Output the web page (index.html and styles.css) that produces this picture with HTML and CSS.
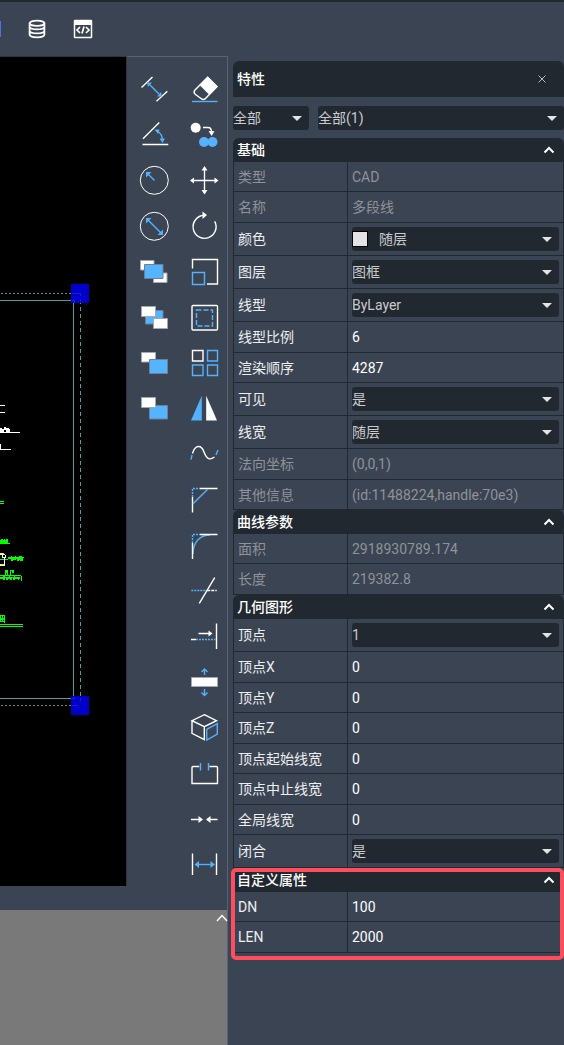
FILE: index.html
```html
<!DOCTYPE html>
<html lang="zh-CN">
<head>
<meta charset="utf-8">
<title>CAD</title>
<link rel="stylesheet" href="styles.css">
</head>
<body>
<div class="app">
<header class="toolbar">
  <span class="toolbar-edge"></span>
  <button class="icon-btn" aria-label="database"><svg class="top-icon" viewBox="0 0 20 20"><g fill="none" stroke="#fff" stroke-width="1.8"><ellipse cx="10" cy="4.2" rx="7.4" ry="2.6"/><path d="M2.6 4.200V15.600C2.600 17.200 5.500 18.300 10 18.300S17.400 17.200 17.400 15.600V4.200M2.600 8C3.500 11.200 16.500 11.200 17.400 8M2.600 12C3.500 15.200 16.500 15.200 17.400 12"/></g></svg></button>
  <button class="icon-btn" aria-label="code"><svg class="top-icon" viewBox="0 0 20 20"><rect x="1.500" y="1.500" width="17" height="17" rx=".5" fill="none" stroke="#fff" stroke-width="1.500"/><path d="M1 1h18v5H1z" fill="#fff"/><path d="M7 8 4 11l3 3M13 8l3 3-3 3M11 7.500 9 14.500" fill="none" stroke="#fff" stroke-width="1.700"/></svg></button>
</header>
<div class="body">
<main class="workspace">
  <div class="drawing">
    <svg class="canvas" viewBox="0 57 126 829" preserveAspectRatio="xMaxYMin slice" shape-rendering="crispEdges" aria-label="drawing">
      <path d="M0 300.500H73.500V698.500H0" fill="none" stroke="#4b9c9b"/>
      <path d="M80.500 293V705" fill="none" stroke="#4b9c9b" stroke-dasharray="4 3"/>
      <path d="M1 293.500H80M1 705.500H80" fill="none" stroke="#5b9494" stroke-dasharray="2 2"/>
      <path d="M71 284h18v19H71zM71 696h18v19H71z" fill="#0000c8"/>
      <path d="M72 293.500H81M80.500 293v3M80.500 299v3M72 300.500h2v2M72 705.500h6M80.500 698v3M72 698.500h2v-2" fill="none" stroke="#1420dc"/>
      <path d="M0 405.500H5M0 412.500H5M0 432.500H20M0 449.500H11M.5 444V449" fill="none" stroke="#fff"/>
      <path d="M0 428h2v1h2v-2h2v1h3v1h1v3H6v-2H4v2H0z" fill="#fff"/>
      <path d="M0 501.500H4M0 503.500H4M0 543.500H10" fill="none" stroke="#0f0"/>
      <path d="M0 540h1v-1h2v1h1v-1h1v1h1v-1h2v4H0z" fill="#0f0"/>
      <path d="M8 557h3v-1h1v1h3v-1h1v1h3v-1h3v1h2v1h-1v3h-3v-1h-1v1h-2v-2h-1v1h-3v1h-2v-2H8z" fill="#0f0"/>
      <path d="M0 559.500H8" fill="none" stroke="#0f0"/>
      <path d="M5 570h3v5H7v-2H6v2H5zM10 570h4v3h-2v-2h-1v4h-1z" fill="#0f0"/>
      <path d="M0 575.500H21M21.500 576v5" fill="none" stroke="#0f0"/>
      <path d="M0 577h3v-1h2v1h4v-1h1v1h4v-1h1v1h5v2h-1v1h-1v-1h-3v1h-2v-2h-1v2h-2v-1H8v1H6v-2H5v2H3v-1H0z" fill="#0f0"/>
      <path d="M4.500 615v8M.5 615v7M2.500 615v7M0 615.500H5M0 618.500H5M0 619.500H5M0 621.500H4M0 624.500H23M0 626.500H23" fill="none" stroke="#0f0"/>
      <path d="M0 554.500H5M2.500 555v3M5.500 555v3M3 557.500H6M4.500 558v8M0 565.500H5" fill="none" stroke="#fff"/>
      <path d="M0 553.500H4M0 564.500H4" fill="none" stroke="#ff0"/>
    </svg>
    <div class="tools" role="toolbar">
      <button class="tool left" aria-label="distance"><svg viewBox="-15 -15 30 30"><path class="w" d="M-12.500-1.500-1.500-12M2.500 12.300 13.300 2.300"/><path class="b" d="M-4-4 5 5"/><path class="bf" d="M-7-6.500h5L-6-2zM8 7.500H3L7 3z"/></svg></button>
      <button class="tool" aria-label="erase"><svg viewBox="-15 -15 30 30"><path class="w" d="M3.700-11.800 13-2.500 1.500 9.500Q-.5 11.500-3 9.500L-8.500 5.500Q-11 3.500-9 1z"/><path class="wf" d="M3.700-12.300 13.700-2.300 5.500 6-4.500-4z"/><path class="b" d="M-12 12.500H13.500"/></svg></button>
      <button class="tool left" aria-label="angle"><svg viewBox="-15 -15 30 30"><path class="w" d="M-11 3.700 5.300-12.500M-11.500 9.500H14.300"/><path class="b" d="M3-4Q8.500-1 8.300 5"/><path class="bf" d="M.5-5.500 5.500-5.500 4-1zM5.500 3.500h5.500L8.500 8z"/></svg></button>
      <button class="tool" aria-label="copy"><svg viewBox="-15 -15 30 30"><circle class="wf" cx="-8.300" cy="-7.300" r="5"/><circle class="bf" cx="0" cy="7" r="5"/><circle class="bf" cx="8.500" cy="7" r="5"/><path class="w" d="M-1-7.500H4Q7.500-7.500 7.500-3"/><path class="wf" d="M4.500-4h6L7.600 1z"/></svg></button>
      <button class="tool left" aria-label="radius"><svg viewBox="-15 -15 30 30"><circle class="t" cx=".3" cy=".3" r="14"/><path class="b" d="M.5.500-6-6"/><path class="bf" d="M-8-8h5.500L-8-2.500z"/></svg></button>
      <button class="tool" aria-label="move"><svg viewBox="-15 -15 30 30"><path class="w" d="M.5-12V12.500M-12 .500H13"/><path class="wf" d="M.5-14 3.500-9.500h-6zM.5 14.500l3-4.500h-6zM-14 .500l4-3v6zM14.500 .500l-4-3v6z"/></svg></button>
      <button class="tool left" aria-label="diameter"><svg viewBox="-15 -15 30 30"><circle class="t" cx=".3" cy=".3" r="14"/><path class="b" d="M-6-6 7 7"/><path class="bf" d="M-8-8h5.500L-8-2.500zM9 9H3.500L9 3.500z"/></svg></button>
      <button class="tool" aria-label="rotate"><svg viewBox="-15 -15 30 30"><path class="w" d="M0-10.700A11.500 11.500 0 1 0 10.700-4.700"/><path class="wf" d="M-1.500-14.500 3-11-1.500-7z"/></svg></button>
      <button class="tool left" aria-label="bring forward"><svg viewBox="-15 -15 30 30"><path class="box" d="M-13.500-11.500H0V-2H-13.500zM-.5 1H13v9.500H-.5z"/><path class="bbox" d="M-9.500-7.500H9V6.500H-9.500z"/></svg></button>
      <button class="tool" aria-label="scale"><svg viewBox="-15 -15 30 30"><path class="w" d="M-11.500-3.500V-12.500H13.500V12H3"/><path class="b" d="M-11.500 .500H.5V12.500H-11.500z"/></svg></button>
      <button class="tool left" aria-label="send backward"><svg viewBox="-15 -15 30 30"><path class="bbox" d="M-8.500-6.500H9V7H-8.500z"/><path class="box" d="M-12.500-10.500H1.500V-.5H-12.500zM-.5 1.500H13.500v10H-.5z"/></svg></button>
      <button class="tool" aria-label="offset"><svg viewBox="-15 -15 30 30"><rect class="w" x="-12" y="-11.500" width="25.500" height="24.500" rx="1"/><path class="b" stroke-dasharray="5 2" d="M-7.500-7H8.500V9H-7.500z"/></svg></button>
      <button class="tool left" aria-label="bring to front"><svg viewBox="-15 -15 30 30"><path class="box" d="M-12.500-10.500H1.500V-1H-12.500z"/><path class="bbox" d="M-4.500-3.500H13.500V10.500H-4.500z"/></svg></button>
      <button class="tool" aria-label="array"><svg viewBox="-15 -15 30 30"><path class="w" d="M-11.500-12.500H-1V-2H-11.500z"/><path class="b" d="M3.500-12.500H13.500V-2H3.500zM-11.500 2H-1V12.500H-11.500zM3.500 2H13.500V12.500H3.500z"/></svg></button>
      <button class="tool left" aria-label="send to back"><svg viewBox="-15 -15 30 30"><path class="bbox" d="M-4.500-3.500H13.500V10H-4.500z"/><path class="box" d="M-12.500-11.500H1.500V-1.500H-12.500z"/></svg></button>
      <button class="tool" aria-label="mirror"><svg viewBox="-15 -15 30 30"><path class="bf" d="M-2.200-13.300V11.500H-13z"/><path class="wf" d="M2.200-13.300V11.500H13z"/></svg></button>
      <button class="tool" aria-label="spline"><svg viewBox="-15 -15 30 30"><path class="w" d="M-11.500-.5C-9-9-3-10 0-2S6 6 10.500 3"/><path class="b" d="M-13 5.700-12 1M12 1 14-4"/></svg></button>
      <button class="tool" aria-label="chamfer"><svg viewBox="-15 -15 30 30"><path class="b dot" d="M-11.500-3V-11.500H-4"/><path class="w" d="M-4-11.500H13.500M-11.500-3V12.500"/><path class="b" d="M-11 3.700 3.700-10.700"/></svg></button>
      <button class="tool" aria-label="fillet"><svg viewBox="-15 -15 30 30"><path class="b dot" d="M-11.500-3V-11.500H-4"/><path class="b" d="M-11 8C-11-4-4-11 6-11"/><path class="w" d="M-4-11.500H13.500M-11.500-3V13"/></svg></button>
      <button class="tool" aria-label="trim"><svg viewBox="-15 -15 30 30"><path class="b dot" d="M-12.700-.5H3.300"/><path class="w" stroke-dasharray="3 1" d="M3.300-.5H12.700"/><path class="w" d="M-4.700 12.300 10.700-13.300"/></svg></button>
      <button class="tool" aria-label="extend"><svg viewBox="-15 -15 30 30"><path class="w" d="M12.500-13.500V12M-5.500-3.500H6M-13 2.500H-8"/><path class="wf" d="M4.500-6.500 8.500-3.500 4.500-.5z"/><path class="b dot" d="M-8 2.500H11.500"/></svg></button>
      <button class="tool" aria-label="stretch"><svg viewBox="-15 -15 30 30"><path class="box" d="M-12.500-5.500H13.500V3.500H-12.500z"/><path class="b" d="M.5-8V-14M-2.500-11 .5-14 3.500-11M.5 6v6M-2.500 9.500l3 3 3-3"/></svg></button>
      <button class="tool" aria-label="block"><svg viewBox="-15 -15 30 30"><path class="w" d="M.3-13.300 12.500-7.300.3-1.300-12-7.300zM-12-7.300V5.300L.3 11.700V-1.300"/><path class="b" d="M2.700 1.300 13.300-4.300V6L2.700 12z"/></svg></button>
      <button class="tool" aria-label="break"><svg viewBox="-15 -15 30 30"><path class="w" d="M-4.700-7.500H-11Q-12-7.500-12-6.500V9.500H13.500V-6.500Q13.500-7.500 12.500-7.500H5.300"/><path class="b" d="M-3.500-11V-3.500M4.500-11V-3.500"/></svg></button>
      <button class="tool" aria-label="join"><svg viewBox="-15 -15 30 30"><path class="w" d="M-13-.5H-4M13.500-.5H5"/><path class="wf" d="M-5.500-4-1-.5-5.500 3zM6.500-4 2-.5 6.500 3z"/></svg></button>
      <button class="tool" aria-label="lengthen"><svg viewBox="-15 -15 30 30"><path class="w" d="M-11.500-11.500V10M12.500-11.500V10"/><path class="b" d="M-7-.5H8"/><path class="bf" d="M-5-4-9.500-.5-5 3zM6.500-4 11-.5 6.500 3z"/></svg></button>
    </div>
  </div>
  <div class="command"><button class="expand" aria-label="expand"><svg viewBox="0 0 12 8"><path d="M1 7 6 1.500 11 7" fill="none" stroke="#fff" stroke-width="1.400"/></svg></button></div>
</main>
<aside class="panel">
  <div class="panel-title"><span>特性</span><button class="close" aria-label="close"><svg viewBox="0 0 10 10"><path d="M1.500 1.500 8.500 8.500M8.500 1.500 1.500 8.500" fill="none" stroke="#bbb"/></svg></button></div>
  <div class="filters">
    <span class="pick"><select aria-label="范围"><option>全部</option></select></span>
    <span class="pick"><select aria-label="对象"><option>全部(1)</option></select></span>
  </div>
  <section>
    <button class="section-head"><span>基础</span><svg viewBox="0 0 12 8"><path d="M1.500 6.500 6 2 10.500 6.500"/></svg></button>
    <table>
      <tr class="off"><th><label for="f1">类型</label></th><td><input id="f1" readonly value="CAD"></td></tr>
      <tr class="off"><th><label for="f2">名称</label></th><td><input id="f2" readonly value="多段线"></td></tr>
      <tr class="choice"><th><label for="f3">颜色</label></th><td><span class="pick"><i class="swatch"></i><select id="f3"><option>随层</option></select></span></td></tr>
      <tr class="choice"><th><label for="f4">图层</label></th><td><span class="pick"><select id="f4"><option>图框</option></select></span></td></tr>
      <tr class="choice"><th><label for="f5">线型</label></th><td><span class="pick"><select id="f5"><option>ByLayer</option></select></span></td></tr>
      <tr><th><label for="f6">线型比例</label></th><td><input id="f6" value="6"></td></tr>
      <tr><th><label for="f7">渲染顺序</label></th><td><input id="f7" value="4287"></td></tr>
      <tr class="choice"><th><label for="f8">可见</label></th><td><span class="pick"><select id="f8"><option>是</option></select></span></td></tr>
      <tr class="choice"><th><label for="f9">线宽</label></th><td><span class="pick"><select id="f9"><option>随层</option></select></span></td></tr>
      <tr class="off"><th><label for="f10">法向坐标</label></th><td><input id="f10" readonly value="(0,0,1)"></td></tr>
      <tr class="off"><th><label for="f11">其他信息</label></th><td><input id="f11" readonly value="(id:11488224,handle:70e3)"></td></tr>
    </table>
  </section>
  <section>
    <button class="section-head"><span>曲线参数</span><svg viewBox="0 0 12 8"><path d="M1.500 6.500 6 2 10.500 6.500"/></svg></button>
    <table>
      <tr class="off"><th><label for="f12">面积</label></th><td><input id="f12" readonly value="2918930789.174"></td></tr>
      <tr class="off"><th><label for="f13">长度</label></th><td><input id="f13" readonly value="219382.8"></td></tr>
    </table>
  </section>
  <section>
    <button class="section-head"><span>几何图形</span><svg viewBox="0 0 12 8"><path d="M1.500 6.500 6 2 10.500 6.500"/></svg></button>
    <table>
      <tr class="choice"><th><label for="f14">顶点</label></th><td><span class="pick"><select id="f14"><option>1</option></select></span></td></tr>
      <tr><th><label for="f15">顶点X</label></th><td><input id="f15" value="0"></td></tr>
      <tr><th><label for="f16">顶点Y</label></th><td><input id="f16" value="0"></td></tr>
      <tr><th><label for="f17">顶点Z</label></th><td><input id="f17" value="0"></td></tr>
      <tr><th><label for="f18">顶点起始线宽</label></th><td><input id="f18" value="0"></td></tr>
      <tr><th><label for="f19">顶点中止线宽</label></th><td><input id="f19" value="0"></td></tr>
      <tr><th><label for="f20">全局线宽</label></th><td><input id="f20" value="0"></td></tr>
      <tr class="choice"><th><label for="f21">闭合</label></th><td><span class="pick"><select id="f21"><option>是</option></select></span></td></tr>
    </table>
  </section>
  <section class="marked">
    <button class="section-head"><span>自定义属性</span><svg viewBox="0 0 12 8"><path d="M1.500 6.500 6 2 10.500 6.500"/></svg></button>
    <table>
      <tr><th><label for="f22">DN</label></th><td><input id="f22" value="100"></td></tr>
      <tr><th><label for="f23">LEN</label></th><td><input id="f23" value="2000"></td></tr>
    </table>
  </section>
</aside>
</div>
</div>
</body>
</html>
```

FILE: styles.css
```css
* { box-sizing: border-box; }
body { margin: 0; background: #3b4453; color: #fff; font: 14px/20px Roboto, "Noto Sans CJK SC", sans-serif; }
button, input, select { font: inherit; color: inherit; border: 0; padding: 0; margin: 0; background: none; border-radius: 0; }
svg { display: block; }
.app { min-height: 100vh; display: flex; flex-direction: column; border-top: 2px solid #212830; }
.toolbar { height: 54px; display: flex; align-items: center; }
.toolbar-edge { width: 1px; height: 16px; margin-right: 26px; background: #5470e0; }
.icon-btn { margin-right: 26px; }
.top-icon { width: 20px; height: 20px; }
.body { flex: 1; display: grid; grid-template-columns: minmax(0, 1fr) 331px; column-gap: 5px; }
.workspace { display: flex; flex-direction: column; border-right: 1px solid #596273; }
.drawing { display: grid; grid-template-columns: minmax(0, 1fr) 100px; margin-bottom: 22px; }
.canvas { width: 100%; height: 830px; background: #000; border-top: 1px solid #333; border-right: 1px solid #333; }
.tools { display: grid; grid-template-columns: 30px 30px; grid-template-rows: repeat(6, 46px 45px 46px); column-gap: 20px; padding: 9px 8px 0 12px; border-top: 1px solid #596273; }
.tool { grid-column: 2; align-self: start; margin-top: 8px; width: 30px; height: 30px; }
.tool.left { grid-column: 1; }
.tool svg { width: 30px; height: 30px; overflow: visible; }
.w, .t, .b { fill: none; stroke: #fff; stroke-width: 1.4; }
.t { stroke-width: 1; }
.b { stroke: #55b1fb; }
.wf { fill: #fff; }
.bf { fill: #55b1fb; }
.dot { stroke-dasharray: 2 1; }
.box { fill: #fff; stroke: #a4a9b1; stroke-width: 1; }
.bbox { fill: #55b4ff; stroke: #6c8198; stroke-width: 1; }
.command { flex: 1; min-height: 135px; background: #797979; display: flex; justify-content: flex-end; align-items: flex-start; }
.expand { margin: 4px -1px 0 0; }
.expand svg { width: 12px; height: 8px; }
.panel { padding-top: 5px; }
.panel-title { height: 36px; display: flex; align-items: center; justify-content: space-between; padding: 0 17px 0 4px; background: #212830; border-radius: 6px 6px 0 0; font-weight: 500; }
.close svg { width: 10px; height: 10px; }
.filters { display: grid; grid-template-columns: 76px 1fr; column-gap: 9px; margin: 9px 0 8px; }
.pick { position: relative; display: flex; align-items: center; height: 24px; background: #212830; border-radius: 3px; color: #c9cbce; }
.pick select { appearance: none; flex: 1; min-width: 0; height: 24px; }
.pick::after { content: ""; position: absolute; right: 7px; top: 10px; border: 5px solid transparent; border-top-color: #e3e4e6; border-bottom: 0; pointer-events: none; }
.swatch { width: 16px; height: 16px; margin-right: 11px; background: #e1e3e6; border: 1px solid #000; }
.section-head { width: 100%; height: 24px; display: flex; align-items: center; justify-content: space-between; padding: 0 9px 0 4px; background: #212830; border-radius: 6px 6px 0 0; font-weight: 500; }
.section-head svg { width: 12px; height: 8px; fill: none; stroke: #fff; stroke-width: 2; }
table { width: 100%; table-layout: fixed; border-spacing: 0; }
th, td { height: 30px; padding: 0 4px; border: 0 solid #212830; border-width: 0 0 1px 1px; text-align: left; font-weight: 400; vertical-align: middle; }
th { width: 114px; color: #eceef0; }
td { border-right-width: 1px; }
tr:nth-child(even) > * { height: 31px; }
tr.choice > * { height: 33px; }
td input { display: block; width: 100%; height: 20px; outline: 0; }
.off > * { color: #8f9298; }
.marked { position: relative; }
.marked::after { content: ""; position: absolute; inset: 0 0 -7px -2px; border: 4px solid #ff4d5e; border-radius: 5px; pointer-events: none; }
```
